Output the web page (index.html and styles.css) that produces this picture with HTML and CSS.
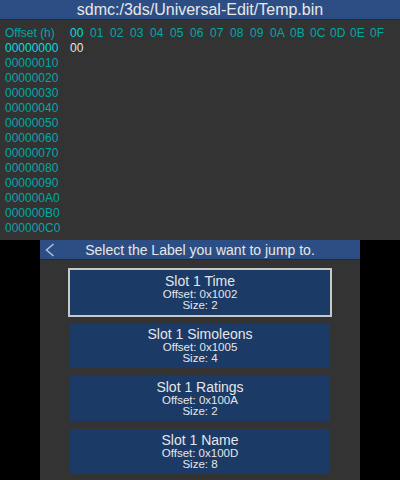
FILE: index.html
```html
<!DOCTYPE html>
<html>
<head>
<meta charset="utf-8">
<link rel="stylesheet" href="styles.css">
</head>
<body>
<div class="top">
  <div class="titlebar">sdmc:/3ds/Universal-Edit/Temp.bin</div>
  <div class="hex">
    <div class="row">
      <span class="off">Offset (h)</span>
      <span class="cell sel">00</span><span class="cell">01</span><span class="cell">02</span><span class="cell">03</span><span class="cell">04</span><span class="cell">05</span><span class="cell">06</span><span class="cell">07</span><span class="cell">08</span><span class="cell">09</span><span class="cell">0A</span><span class="cell">0B</span><span class="cell">0C</span><span class="cell">0D</span><span class="cell">0E</span><span class="cell">0F</span>
    </div>
    <div class="row"><span class="off sel">00000000</span><span class="cell data">00</span></div>
    <div class="row"><span class="off">00000010</span></div>
    <div class="row"><span class="off">00000020</span></div>
    <div class="row"><span class="off">00000030</span></div>
    <div class="row"><span class="off">00000040</span></div>
    <div class="row"><span class="off">00000050</span></div>
    <div class="row"><span class="off">00000060</span></div>
    <div class="row"><span class="off">00000070</span></div>
    <div class="row"><span class="off">00000080</span></div>
    <div class="row"><span class="off">00000090</span></div>
    <div class="row"><span class="off">000000A0</span></div>
    <div class="row"><span class="off">000000B0</span></div>
    <div class="row"><span class="off">000000C0</span></div>
  </div>
</div>
<div class="bottom">
  <div class="bar">
    <svg class="back" width="12" height="14" viewBox="0 0 12 14"><path d="M9.5 1 L2.5 7 L9.5 13" fill="none" stroke="#a9bedc" stroke-width="1.6"/></svg>
    <span class="bartext">Select the Label you want to jump to.</span>
  </div>
  <div class="list">
    <div class="btn selected">
      <div class="name">Slot 1 Time</div>
      <div class="info">Offset: 0x1002</div>
      <div class="info">Size: 2</div>
    </div>
    <div class="btn">
      <div class="name">Slot 1 Simoleons</div>
      <div class="info">Offset: 0x1005</div>
      <div class="info">Size: 4</div>
    </div>
    <div class="btn">
      <div class="name">Slot 1 Ratings</div>
      <div class="info">Offset: 0x100A</div>
      <div class="info">Size: 2</div>
    </div>
    <div class="btn">
      <div class="name">Slot 1 Name</div>
      <div class="info">Offset: 0x100D</div>
      <div class="info">Size: 8</div>
    </div>
  </div>
</div>
</body>
</html>
```
FILE: styles.css
```css
html, body {
  margin: 0;
  padding: 0;
  background: #000;
  font-family: "Liberation Sans", Arial, sans-serif;
}
.top {
  width: 400px;
  height: 240px;
  background: #333333;
  overflow: hidden;
}
.titlebar {
  height: 19px;
  border-bottom: 1px solid #222a36;
  background: #2c4e84;
  color: #e8e8e8;
  font-size: 16px;
  line-height: 20px;
  text-align: center;
}
.hex {
  padding-top: 6px;
  padding-left: 5px;
}
.row {
  display: flex;
  height: 15px;
  line-height: 15px;
  font-size: 12px;
  color: #00a8a8;
}
.off {
  width: 65px;
  flex: none;
}
.cell {
  width: 20px;
  flex: none;
}
.sel {
  color: #00dede;
}
.data {
  color: #e6e6e6;
}
.bottom {
  width: 320px;
  height: 240px;
  margin: 0 auto;
  background: #333333;
  overflow: hidden;
}
.bar {
  height: 19px;
  border-bottom: 1px solid #222a36;
  background: #2c4e84;
  position: relative;
  display: flex;
  align-items: center;
  justify-content: center;
}
.back {
  position: absolute;
  left: 4px;
  top: 3px;
}
.bartext {
  color: #e8e8e8;
  font-size: 14px;
}
.list {
  display: flex;
  flex-direction: column;
  align-items: center;
  gap: 8px;
  padding-top: 10px;
}
.btn {
  width: 260px;
  height: 45px;
  background: #1b3a66;
  color: #e6e6e6;
  display: flex;
  flex-direction: column;
  align-items: center;
  justify-content: center;
  box-sizing: border-box;
}
.btn.selected {
  outline: 2px solid #c8c8c8;
}
.name {
  font-size: 14px;
  line-height: 15px;
}
.info {
  font-size: 11.5px;
  line-height: 11px;
}
```
